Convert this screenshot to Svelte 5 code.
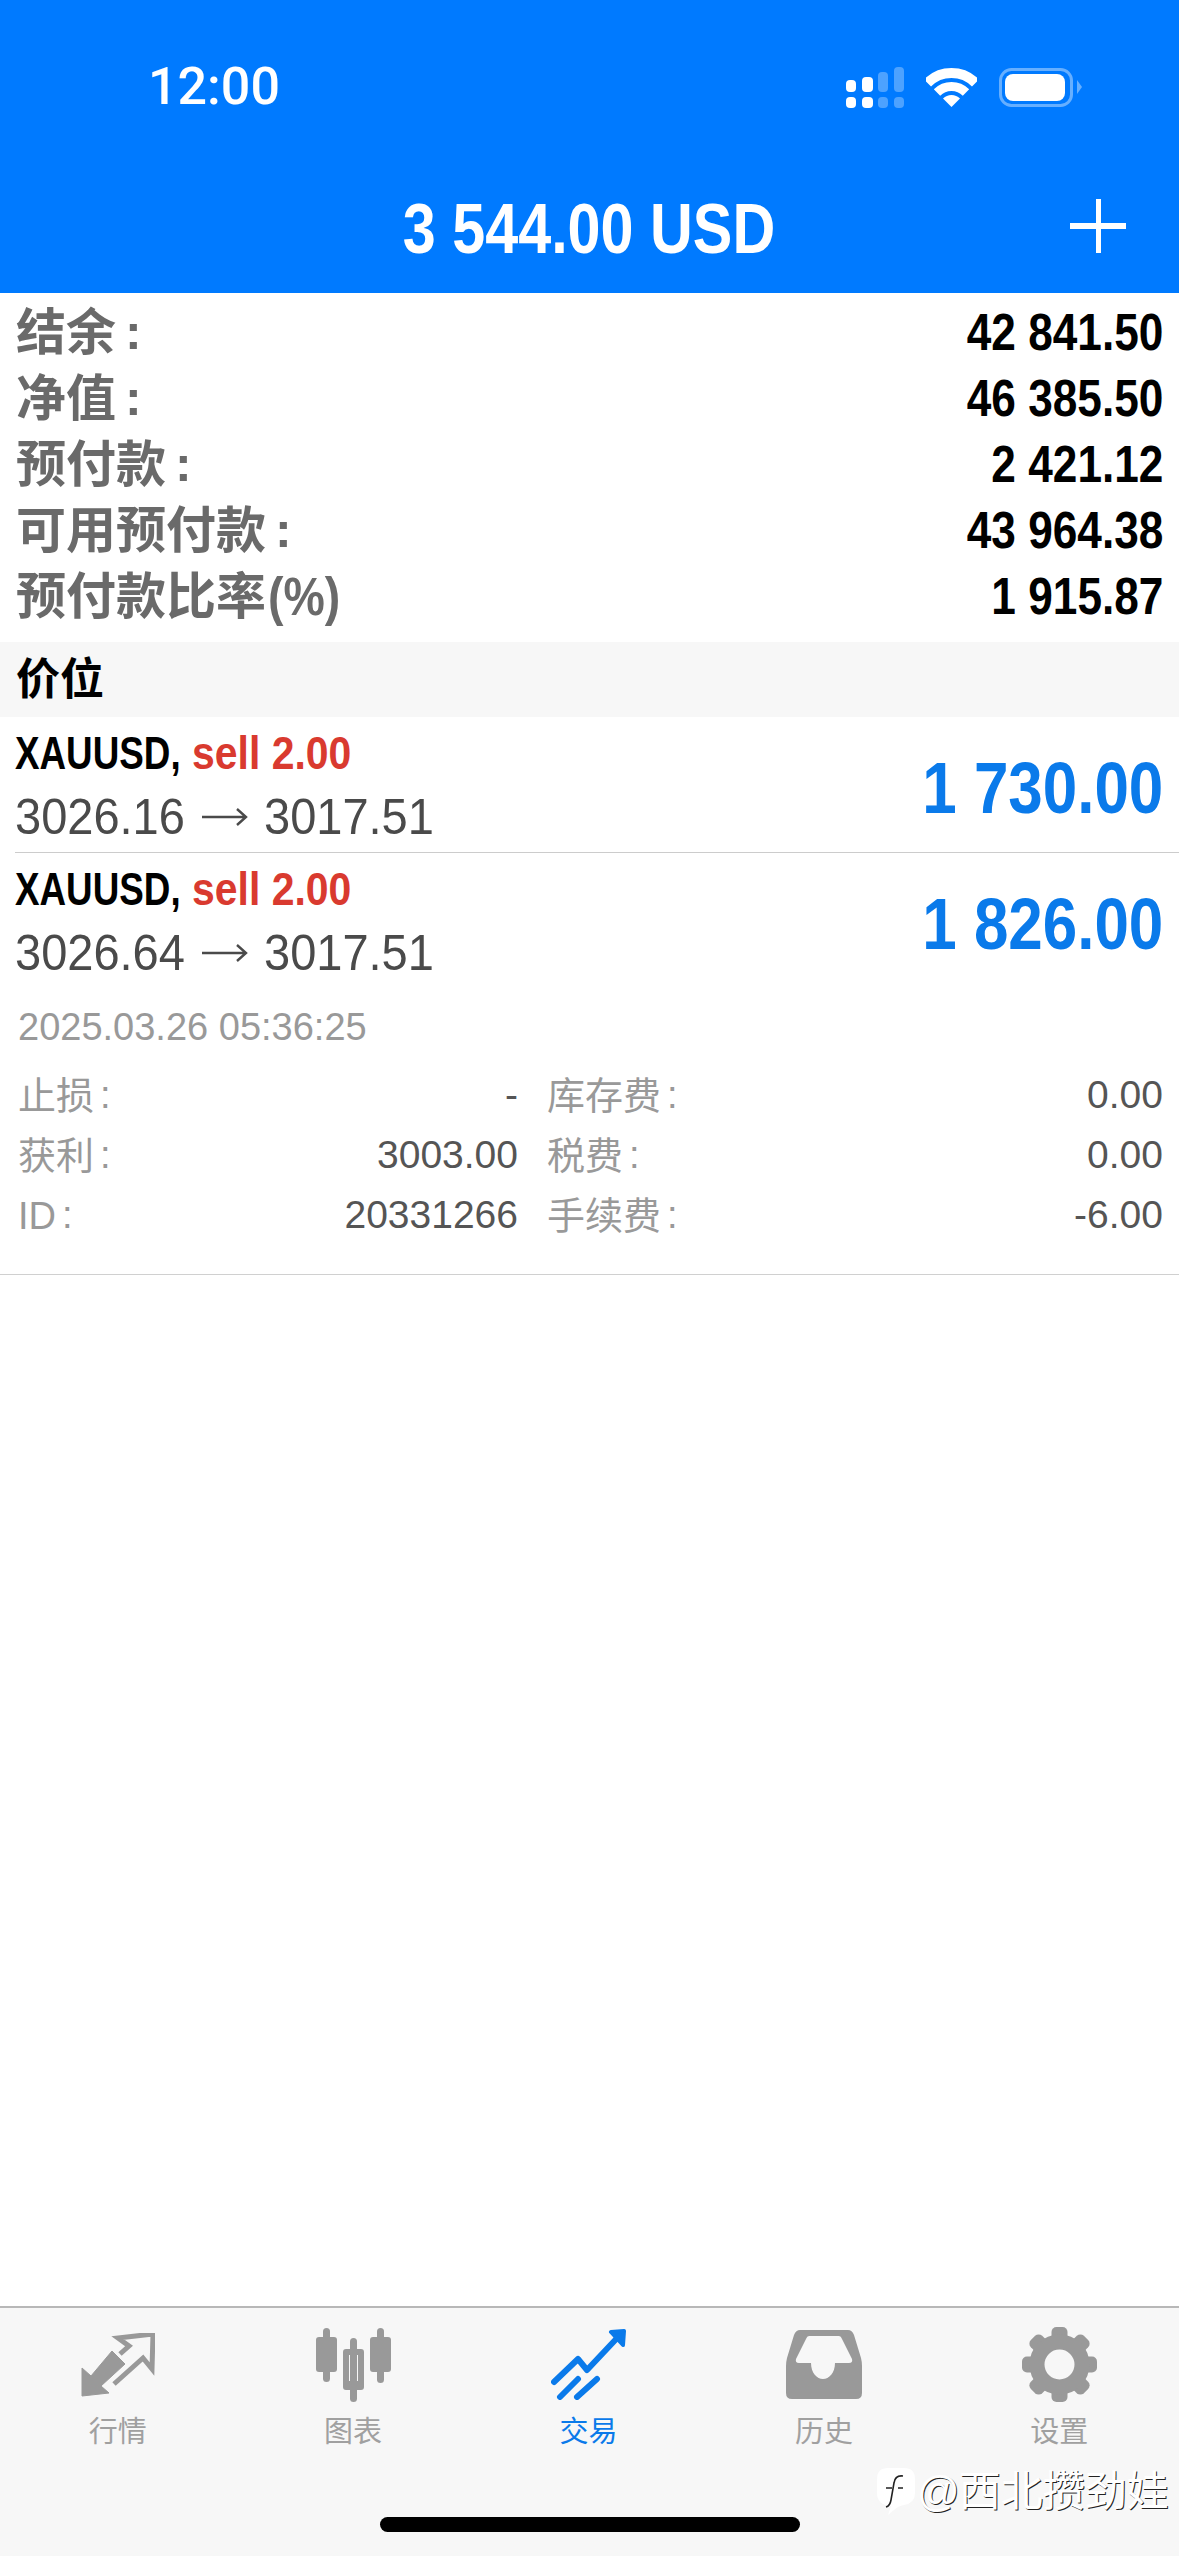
<script lang="ts">
	const summary = [
		{ label: '结余', colon: true, value: '42 841.50' },
		{ label: '净值', colon: true, value: '46 385.50' },
		{ label: '预付款', colon: true, value: '2 421.12' },
		{ label: '可用预付款', colon: true, value: '43 964.38' },
		{ label: '预付款比率', suffix: '(%)', value: '1 915.87' }
	];

	const positions = [
		{ symbol: 'XAUUSD,', side: 'sell 2.00', open: '3026.16', close: '3017.51', profit: '1 730.00' },
		{ symbol: 'XAUUSD,', side: 'sell 2.00', open: '3026.64', close: '3017.51', profit: '1 826.00' }
	];

	const details = [
		['止损', '-', '库存费', '0.00'],
		['获利', '3003.00', '税费', '0.00'],
		['ID', '20331266', '手续费', '-6.00']
	];

	const tabs = [
		{ id: 'quotes', label: '行情' },
		{ id: 'charts', label: '图表' },
		{ id: 'trade', label: '交易' },
		{ id: 'history', label: '历史' },
		{ id: 'settings', label: '设置' }
	];

	const active = 'trade';
	const gearTeeth = [0, 45, 90, 135, 180, 225, 270, 315];
</script>

<div class="screen">
	<header class="header">
		<div class="status">
			<span class="time">12:00</span>
			<div class="status-icons">
				<svg width="58" height="41" viewBox="0 0 58 41" fill="#fff">
					<rect x="0" y="13" width="10" height="12" rx="4" />
					<rect x="16" y="10" width="11" height="15" rx="4" />
					<rect x="32" y="5" width="10" height="20" rx="4" opacity=".3" />
					<rect x="48" y="0" width="10" height="25" rx="4" opacity=".3" />
					<rect x="0" y="30" width="10" height="11" rx="4" />
					<rect x="16" y="30" width="11" height="11" rx="4" />
					<rect x="32" y="30" width="10" height="11" rx="4" opacity=".3" />
					<rect x="48" y="30" width="10" height="11" rx="4" opacity=".3" />
				</svg>
				<svg width="51" height="39" viewBox="0 0 51 39" fill="none" stroke="#fff">
					<path d="M1.5 15A34 34 0 0 1 49.5 15" stroke-width="10" />
					<path d="M11 24.5A20.5 20.5 0 0 1 40 24.5" stroke-width="9" />
					<path d="M25.5 39L17 30.5A12 12 0 0 1 34 30.5Z" fill="#fff" stroke="none" />
				</svg>
				<svg width="83" height="39" viewBox="0 0 83 39">
					<rect x="1.5" y="1.5" width="71" height="36" rx="11" fill="none" stroke="#fff" stroke-opacity=".4" stroke-width="3" />
					<rect x="6" y="6" width="60" height="27" rx="8" fill="#fff" />
					<path d="M78 12L83 19L78 26Z" fill="#fff" opacity=".4" />
				</svg>
			</div>
		</div>
		<div class="title-row">
			<h1 class="title"><span class="cond center">3 544.00 USD</span></h1>
			<span class="plus"></span>
		</div>
	</header>

	<section class="summary">
		{#each summary as row}
			<div class="summary-row">
				<span class="summary-label">
					<span class="cjk">{row.label}</span>{#if row.colon}<span class="colon">:</span>{/if}{#if row.suffix}<span class="suffix cond left">{row.suffix}</span>{/if}
				</span>
				<span class="summary-value cond">{row.value}</span>
			</div>
		{/each}
	</section>

	<div class="section-title"><span class="cjk">价位</span></div>

	<section class="positions">
		{#each positions as pos, i}
			<div class="position" class:divided={i === 0}>
				<div class="position-info">
					<div class="position-head">
						<span class="symbol cond left">{pos.symbol}</span>
						<span class="side cond left">{pos.side}</span>
					</div>
					<div class="position-prices">
						<span class="price">{pos.open}</span>
						<svg class="arrow" width="46" height="22" viewBox="0 0 46 22" fill="none" stroke="#4a4a4a" stroke-width="2.4">
							<path d="M0 11H44M35 3L44 11L35 19" />
						</svg>
						<span class="price">{pos.close}</span>
					</div>
				</div>
				<span class="profit cond">{pos.profit}</span>
			</div>
		{/each}
	</section>

	<section class="details">
		<div class="date">2025.03.26 05:36:25</div>
		{#each details as row}
			<div class="detail-row">
				<div class="detail-cell">
					<span class="detail-label"><span class="cjk">{row[0]}</span><span class="colon">:</span></span>
					<span class="detail-value">{row[1]}</span>
				</div>
				<div class="detail-cell">
					<span class="detail-label"><span class="cjk">{row[2]}</span><span class="colon">:</span></span>
					<span class="detail-value">{row[3]}</span>
				</div>
			</div>
		{/each}
	</section>

	<div class="spacer"></div>

	<nav class="tabbar">
		{#each tabs as tab}
			<div class="tab" class:active={tab.id === active}>
				<div class="tab-icon">
					{#if tab.id === 'quotes'}
						<svg width="74" height="64" viewBox="0 0 74 64">
							<path d="M1 63V35L10 43L31 18L44 31L20 53L28 60Z" fill="#999" stroke="#999" stroke-width="1" stroke-linejoin="round" />
							<path d="M39 21L48 13L37 5L72 1L71 36L62 25L33 51" fill="none" stroke="#999" stroke-width="5" />
						</svg>
					{:else if tab.id === 'charts'}
						<svg width="75" height="74" viewBox="0 0 75 74" fill="#999">
							<rect x="7" y="0" width="7" height="54" rx="3.5" />
							<rect x="0" y="9" width="21" height="35" rx="3" />
							<rect x="34" y="10" width="7" height="64" rx="3.5" />
							<path fill-rule="evenodd" d="M30 21H45Q48 21 48 24V59Q48 62 45 62H30Q27 62 27 59V24Q27 21 30 21ZM33 27V53H42V27Z" />
							<rect x="61" y="0" width="7" height="55" rx="3.5" />
							<rect x="54" y="9" width="21" height="35" rx="3" />
						</svg>
					{:else if tab.id === 'trade'}
						<svg width="76" height="71" viewBox="0 0 76 71" fill="none" stroke="#0a7aea" stroke-width="6" stroke-linecap="round" stroke-linejoin="round">
							<path d="M3 53L27 30L36 41L68 7" />
							<path d="M9 68L27 50M26 68L46 50" />
							<path d="M60 3L73 2L72 16Z" fill="#0a7aea" stroke-width="4" />
						</svg>
					{:else if tab.id === 'history'}
						<svg width="76" height="69" viewBox="0 0 76 69">
							<path fill="#999" fill-rule="evenodd" d="M14 0H62Q66 0 68 5L75 28Q76 32 76 36V63Q76 69 70 69H6Q0 69 0 63V36Q0 32 1 28L8 5Q10 0 14 0ZM23 6Q21 6 20 9L10 29Q9 33 13 33H25C25 43 31 49 37 49C43 49 49 43 49 33H63Q67 33 66 29L56 9Q55 6 53 6Z" />
						</svg>
					{:else}
						<svg width="75" height="75" viewBox="-37.5 -37.5 75 75" fill="#999">
							{#each gearTeeth as deg}
								<rect x="-8" y="-37.5" width="16" height="16" rx="5" transform="rotate({deg})" />
							{/each}
							<circle r="22.5" fill="none" stroke="#999" stroke-width="15" />
						</svg>
					{/if}
				</div>
				<span class="tab-label">{tab.label}</span>
			</div>
		{/each}
	</nav>

	<div class="watermark">
		<svg width="40" height="50" viewBox="0 0 40 50">
			<path d="M12 1H28Q39 1 39 12V26Q39 36 28 38Q22 39 18 43L12 48L15 39Q1 38 1 26V12Q1 1 12 1Z" fill="#fff" />
			<path d="M27 9Q19 8 18 16L15 33Q14 39 10 40M10 21H16M22 21H27" fill="none" stroke="#222" stroke-width="1.6" />
		</svg>
		<span class="watermark-at">@</span><span class="watermark-name">西北攒劲娃</span>
	</div>
	<div class="home-bar"></div>
</div>

<style>
	:global(body) {
		margin: 0;
		background: #fff;
	}
	.screen {
		position: relative;
		width: 1179px;
		height: 2556px;
		display: flex;
		flex-direction: column;
		overflow: hidden;
		font-family: 'Liberation Sans', 'Noto Sans CJK SC', sans-serif;
		background: #fff;
	}
	.cond {
		display: inline-block;
		white-space: nowrap;
		transform: scaleX(0.85);
		transform-origin: right center;
	}
	.cond.left {
		transform-origin: left center;
	}
	.cond.center {
		transform-origin: center;
	}
	.cjk {
		display: inline-block;
		line-height: 1;
		position: relative;
		top: 0.02em;
	}

	.header {
		height: 293px;
		background: #007aff;
		color: #fff;
		display: flex;
		flex-direction: column;
	}
	.status {
		height: 174px;
		display: flex;
		align-items: center;
		justify-content: space-between;
		padding: 0 97px 0 148px;
		box-sizing: border-box;
	}
	.time {
		font-family: Roboto, 'Liberation Sans', sans-serif;
		font-size: 52px;
		font-weight: 500;
		line-height: 1;
	}
	.status-icons {
		display: flex;
		align-items: center;
		gap: 22px;
	}
	.title-row {
		position: relative;
		flex: 1;
		display: flex;
		align-items: center;
		justify-content: center;
		padding-bottom: 10px;
	}
	.title {
		margin: 0;
		font-size: 71px;
		font-weight: 700;
		line-height: 1;
		white-space: nowrap;
	}
	.title .cond {
		transform: scaleX(0.835);
	}
	.plus {
		position: absolute;
		right: 53px;
		top: 25px;
		width: 56px;
		height: 54px;
		background:
			linear-gradient(#fff, #fff) center / 100% 6px no-repeat,
			linear-gradient(#fff, #fff) center / 5px 100% no-repeat;
	}

	.summary {
		padding: 6px 16px 13px;
	}
	.summary-row {
		height: 66px;
		display: flex;
		align-items: center;
		justify-content: space-between;
	}
	.summary-label {
		display: flex;
		align-items: center;
		font-size: 50px;
		font-weight: 700;
		color: #6a6a6a;
		white-space: nowrap;
	}
	.summary-label .colon {
		margin-left: 9px;
	}
	.suffix {
		width: 70px;
		font-size: 54px;
		transform: scaleX(0.86);
		margin-left: 2px;
	}
	.summary-value {
		font-size: 52px;
		font-weight: 700;
		color: #000;
	}
	.section-title {
		height: 75px;
		display: flex;
		align-items: center;
		padding-left: 16px;
		background: #f7f7f7;
		font-size: 44px;
		font-weight: 700;
		color: #000;
	}

	.positions {
		padding-left: 15px;
	}
	.position {
		height: 136px;
		box-sizing: border-box;
		padding-right: 16px;
		display: flex;
		align-items: center;
		justify-content: space-between;
	}
	.position.divided {
		border-bottom: 1px solid #ccc;
	}
	.position-head {
		height: 64px;
		display: flex;
		align-items: center;
		font-size: 46px;
		line-height: 1;
		font-weight: 700;
	}
	.symbol {
		color: #000;
		width: 177px;
		transform: scaleX(0.8);
	}
	.side {
		color: #d93a2f;
		transform: scaleX(0.89);
	}
	.position-prices {
		height: 64px;
		display: flex;
		align-items: center;
		font-size: 50px;
		line-height: 1;
		color: #4a4a4a;
		white-space: nowrap;
	}
	.price {
		display: inline-block;
		width: 170px;
		transform: scaleX(0.94);
		transform-origin: left center;
	}
	.arrow {
		margin: 0 16px 0 17px;
	}
	.profit {
		font-size: 72px;
		font-weight: 700;
		color: #0a7aea;
		line-height: 1;
		position: relative;
		top: 3px;
		transform: scaleX(0.86);
	}

	.details {
		padding: 8px 16px 29px 18px;
		border-bottom: 1px solid #d0d0d0;
	}
	.date {
		height: 60px;
		display: flex;
		align-items: center;
		font-size: 38px;
		color: #999;
		margin-bottom: 8px;
	}
	.detail-row {
		height: 60px;
		display: grid;
		grid-template-columns: 500px 1fr;
		column-gap: 29px;
		align-items: center;
	}
	.detail-cell {
		display: flex;
		align-items: center;
		justify-content: space-between;
	}
	.detail-label {
		display: flex;
		align-items: center;
		font-size: 38px;
		color: #999;
	}
	.detail-label .colon {
		margin-left: 6px;
	}
	.detail-value {
		font-size: 39px;
		color: #555;
	}

	.spacer {
		flex: 1;
	}
	.tabbar {
		height: 250px;
		box-sizing: border-box;
		border-top: 2px solid #b8b8b8;
		background: #f7f7f7;
		display: flex;
		padding: 19px 2px 0 0;
	}
	.tab {
		flex: 1;
		display: flex;
		flex-direction: column;
		align-items: center;
		color: #a0a0a0;
	}
	.tab.active {
		color: #0a7aea;
	}
	.tab-icon {
		height: 75px;
		display: flex;
		align-items: center;
		justify-content: center;
	}
	.tab-label {
		margin-top: 13px;
		font-size: 29px;
		line-height: 34px;
	}

	.watermark {
		position: absolute;
		left: 876px;
		top: 2467px;
		display: flex;
		align-items: center;
		gap: 1px;
		font-size: 42px;
		line-height: 50px;
		color: #fff;
		text-shadow: 1px 1px 0 #222;
		white-space: nowrap;
	}
	.watermark-name {
		margin-left: -2px;
	}
	.home-bar {
		position: absolute;
		left: 380px;
		top: 2517px;
		width: 420px;
		height: 15px;
		border-radius: 8px;
		background: #000;
	}
</style>
